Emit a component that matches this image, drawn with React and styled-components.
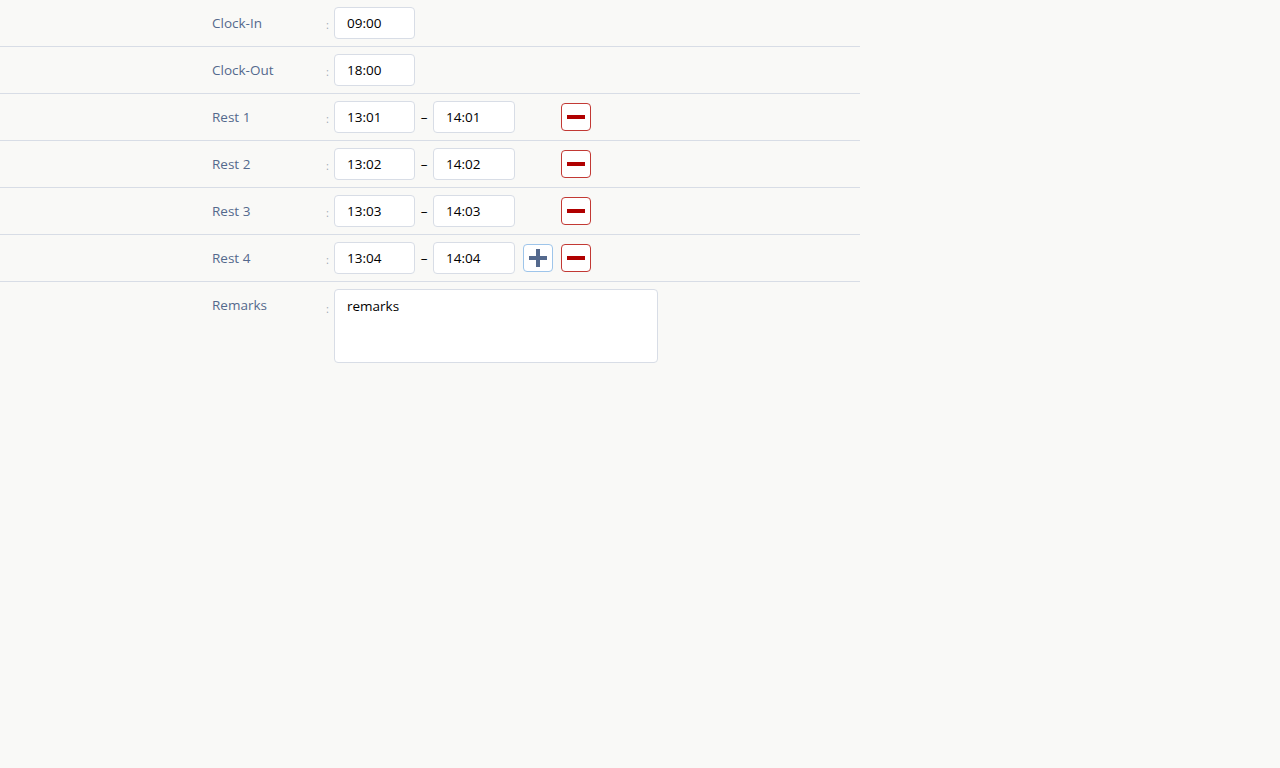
import React from "react";
import styled, { createGlobalStyle } from "styled-components";

const Global = createGlobalStyle`
  html, body {
    margin: 0;
    padding: 0;
    background: #f9f9f7;
    font-family: "Open Sans", "Liberation Sans", sans-serif;
    font-size: 13.5px;
  }
`;

const Form = styled.div`
  width: 860px;
`;

const Row = styled.div`
  display: flex;
  align-items: ${p => (p.top ? "flex-start" : "center")};
  min-height: 47px;
  padding: ${p => (p.top ? "7px 0" : "0")};
  padding-left: 212px;
  box-sizing: border-box;
  border-bottom: ${p => (p.last ? "none" : "1px solid #d8dde6")};
`;

const Label = styled.div`
  width: 114px;
  color: #54698d;
  line-height: ${p => (p.top ? "32px" : "normal")};
`;

const Colon = styled.span`
  width: 8px;
  color: #9faab5;
  font-size: 11px;
  line-height: ${p => (p.top ? "34px" : "normal")};
  padding-top: 3px;
`;

const TimeInput = styled.input`
  width: ${p => p.w || 81}px;
  height: 32px;
  box-sizing: border-box;
  border: 1px solid #d8dde6;
  border-radius: 4px;
  background: #fff;
  padding: 0 12px;
  font: inherit;
  color: #000;
  outline: none;
`;

const Dash = styled.span`
  width: 18px;
  text-align: center;
  color: #000;
`;

const IconButton = styled.button`
  width: 30px;
  height: 28px;
  margin-left: 8px;
  padding: 0;
  border-radius: 4px;
  background: #fff;
  border: 1px solid ${p => (p.danger ? "#c23934" : "#9ec5ea")};
  display: flex;
  align-items: center;
  justify-content: center;
  visibility: ${p => (p.hidden ? "hidden" : "visible")};
  cursor: pointer;
`;

const Remarks = styled.textarea`
  width: 324px;
  height: 74px;
  box-sizing: border-box;
  border: 1px solid #d8dde6;
  border-radius: 4px;
  background: #fff;
  padding: 7px 12px;
  font: inherit;
  color: #000;
  resize: none;
  outline: none;
`;

const Plus = () => (
  <svg width="18" height="18" viewBox="0 0 18 18">
    <rect x="7" y="0" width="4" height="18" fill="#54698d" />
    <rect x="0" y="7" width="18" height="4" fill="#54698d" />
  </svg>
);

const Minus = () => (
  <svg width="18" height="4" viewBox="0 0 18 4">
    <rect x="0" y="0" width="18" height="4" fill="#b00000" />
  </svg>
);

const rests = [
  ["13:01", "14:01"],
  ["13:02", "14:02"],
  ["13:03", "14:03"],
  ["13:04", "14:04"],
];

const App = () => {
  return (
    <>
      <Global />
      <Form>
        <Row>
          <Label>Clock-In</Label>
          <Colon>:</Colon>
          <TimeInput defaultValue="09:00" />
        </Row>
        <Row>
          <Label>Clock-Out</Label>
          <Colon>:</Colon>
          <TimeInput defaultValue="18:00" />
        </Row>
        {rests.map(([from, to], i) => (
          <Row key={i}>
            <Label>Rest {i + 1}</Label>
            <Colon>:</Colon>
            <TimeInput defaultValue={from} />
            <Dash>–</Dash>
            <TimeInput w={82} defaultValue={to} />
            <IconButton hidden={i !== rests.length - 1}>
              <Plus />
            </IconButton>
            <IconButton danger>
              <Minus />
            </IconButton>
          </Row>
        ))}
        <Row top last>
          <Label top>Remarks</Label>
          <Colon top>:</Colon>
          <Remarks defaultValue="remarks" />
        </Row>
      </Form>
    </>
  );
};

export default App;
